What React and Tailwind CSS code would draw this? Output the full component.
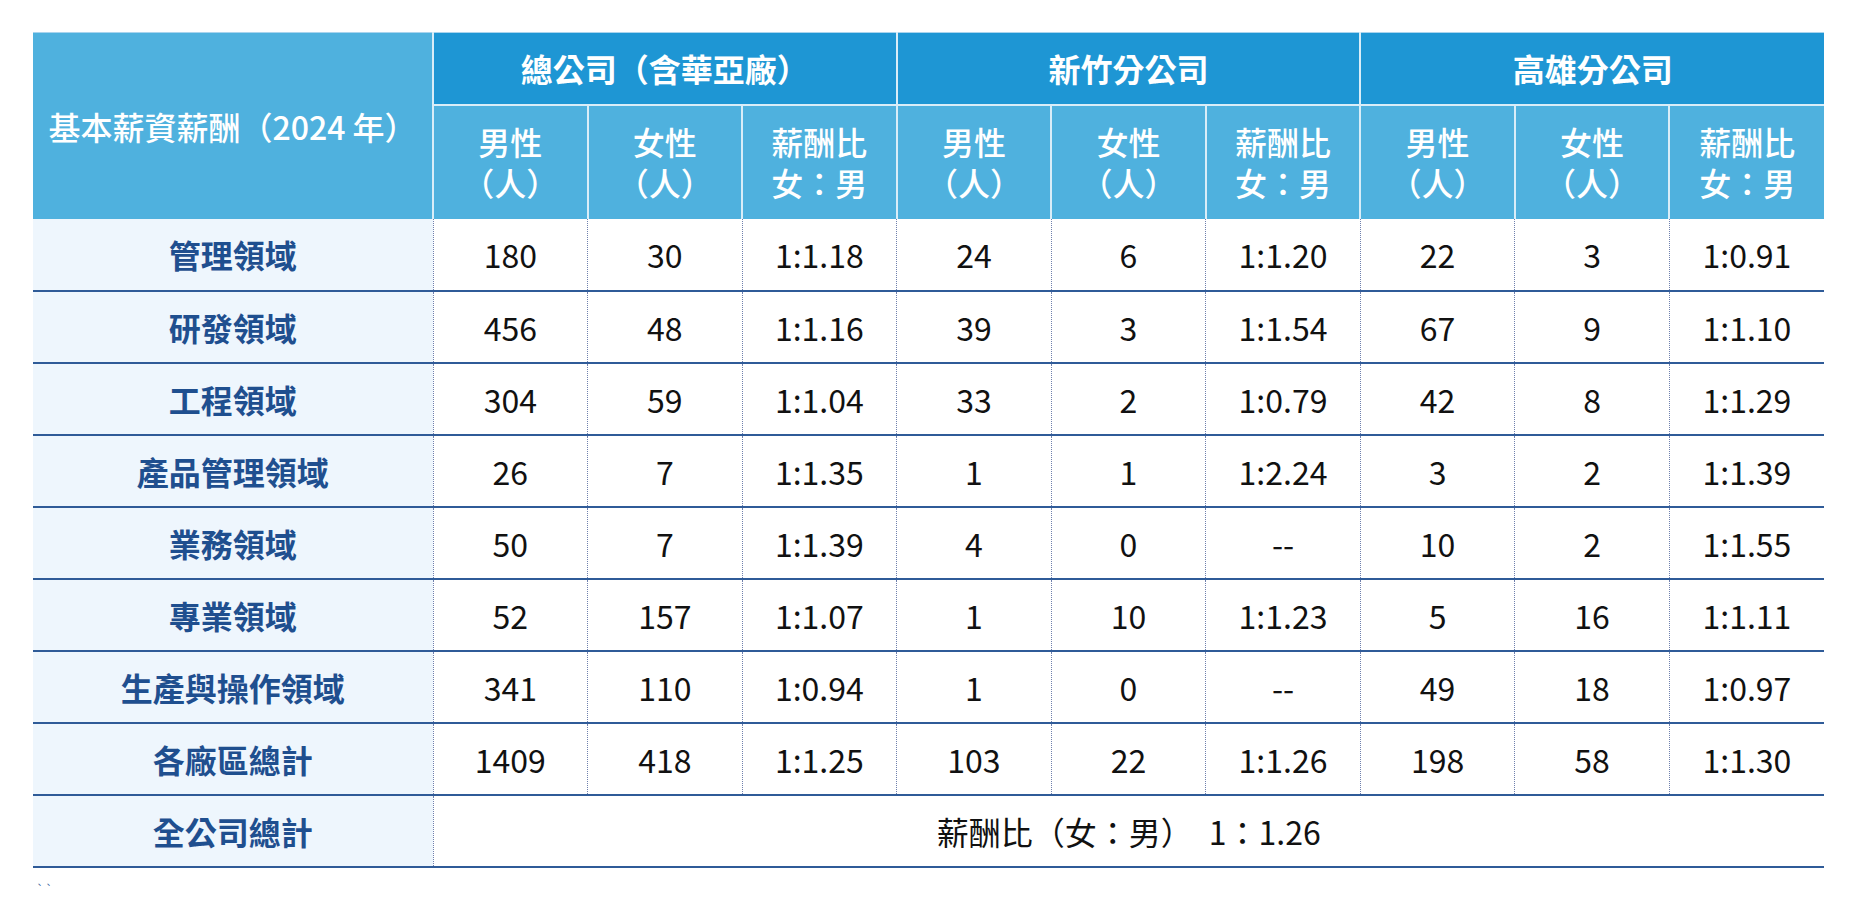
const groups = ["總公司（含華亞廠）", "新竹分公司", "高雄分公司"];

const rows = [
  { label: "管理領域", values: ["180", "30", "1:1.18", "24", "6", "1:1.20", "22", "3", "1:0.91"] },
  { label: "研發領域", values: ["456", "48", "1:1.16", "39", "3", "1:1.54", "67", "9", "1:1.10"] },
  { label: "工程領域", values: ["304", "59", "1:1.04", "33", "2", "1:0.79", "42", "8", "1:1.29"] },
  { label: "產品管理領域", values: ["26", "7", "1:1.35", "1", "1", "1:2.24", "3", "2", "1:1.39"] },
  { label: "業務領域", values: ["50", "7", "1:1.39", "4", "0", "--", "10", "2", "1:1.55"] },
  { label: "專業領域", values: ["52", "157", "1:1.07", "1", "10", "1:1.23", "5", "16", "1:1.11"] },
  { label: "生產與操作領域", values: ["341", "110", "1:0.94", "1", "0", "--", "49", "18", "1:0.97"] },
  { label: "各廠區總計", values: ["1409", "418", "1:1.25", "103", "22", "1:1.26", "198", "58", "1:1.30"] },
];

const subHeads = [
  ["男性", "（人）"],
  ["女性", "（人）"],
  ["薪酬比", "女：男"],
];

const font = { fontFamily: '"Noto Sans CJK TC", "Noto Sans", sans-serif' };

export default function App() {
  return (
    <div className="min-h-[910px] bg-white pl-[33px] pt-[32px]" style={font}>
      <table className="w-[1791px] table-fixed border-collapse text-[32px]">
        <colgroup>
          <col className="w-[400px]" />
          {Array.from({ length: 9 }).map((_, i) => (
            <col key={i} />
          ))}
        </colgroup>
        <thead>
          <tr className="h-[72px] border-t border-[#a9d4ee]">
            <th
              rowSpan={2}
              className="bg-[#4fb1de] text-white font-medium leading-[42px] border-r-2 border-[#d9edf8]"
            >
              基本薪資薪酬（2024 年）
            </th>
            {groups.map((g, i) => (
              <th
                key={g}
                colSpan={3}
                className={`bg-[#1e96d4] text-white font-bold border-b-2 border-[#d9edf8] ${
                  i < 2 ? "border-r-2" : ""
                }`}
              >
                {g}
              </th>
            ))}
          </tr>
          <tr className="h-[114px]">
            {[0, 1, 2].map((g) =>
              subHeads.map((s, i) => (
                <th
                  key={`${g}-${i}`}
                  className={`bg-[#4fb1de] text-white font-medium leading-[41px] ${
                    g * 3 + i < 8 ? "border-r-2 border-[#d9edf8]" : ""
                  }`}
                >
                  <div>{s[0]}</div>
                  <div>{s[1]}</div>
                </th>
              ))
            )}
          </tr>
        </thead>
        <tbody>
          {rows.map((r) => (
            <tr key={r.label} className="h-[72px] border-b-2 border-[#2f5b98]">
              <td className="bg-[#eef6fd] text-center font-bold text-[#1f4f8f]">{r.label}</td>
              {r.values.map((v, i) => (
                <td
                  key={i}
                  className="border-l border-dotted border-[#6f80ad] text-center text-[#111]"
                >
                  {v}
                </td>
              ))}
            </tr>
          ))}
          <tr className="h-[72px] border-b-2 border-[#2f5b98]">
            <td className="bg-[#eef6fd] text-center font-bold text-[#1f4f8f]">全公司總計</td>
            <td
              colSpan={9}
              className="border-l border-dotted border-[#6f80ad] text-center text-[#111]"
            >
              薪酬比（女：男）　1：1.26
            </td>
          </tr>
        </tbody>
      </table>
      <div className="pl-[2px] pt-[12px] text-[9px] leading-none text-[#2f5b98]">、、</div>
    </div>
  );
}
